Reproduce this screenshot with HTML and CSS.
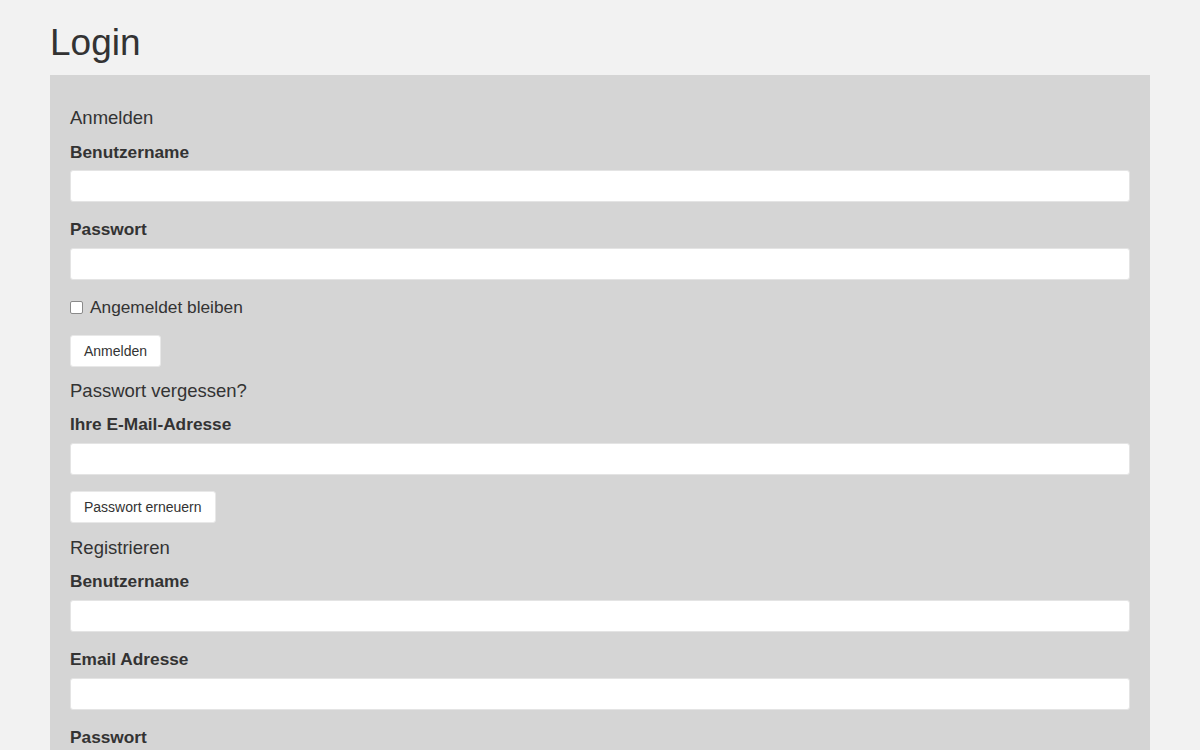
FILE: index.html
```html
<!DOCTYPE html>
<html lang="de">
<head>
<meta charset="utf-8">
<title>Login</title>
<link rel="stylesheet" href="styles.css">
</head>
<body>
<div class="page">
  <h1 class="title">Login</h1>
  <div class="panel">
    <form class="section">
      <h2 class="section-title">Anmelden</h2>
      <div class="field">
        <label class="label">Benutzername</label>
        <input class="input" type="text">
      </div>
      <div class="field">
        <label class="label">Passwort</label>
        <input class="input" type="password">
      </div>
      <label class="check"><span class="box"></span>Angemeldet bleiben</label>
      <button class="btn" type="button">Anmelden</button>
    </form>
    <form class="section">
      <h2 class="section-title">Passwort vergessen?</h2>
      <div class="field">
        <label class="label">Ihre E-Mail-Adresse</label>
        <input class="input" type="text">
      </div>
      <button class="btn" type="button">Passwort erneuern</button>
    </form>
    <form class="section">
      <h2 class="section-title">Registrieren</h2>
      <div class="field">
        <label class="label">Benutzername</label>
        <input class="input" type="text">
      </div>
      <div class="field">
        <label class="label">Email Adresse</label>
        <input class="input" type="text">
      </div>
      <div class="field">
        <label class="label">Passwort</label>
        <input class="input" type="password">
      </div>
    </form>
  </div>
</div>
</body>
</html>
```

FILE: styles.css
```css
html, body {
  margin: 0;
  padding: 0;
  background: #f2f2f2;
  font-family: "Liberation Sans", Arial, sans-serif;
  color: #333;
}
.page {
  padding: 0 50px;
}
.title {
  margin: 21px 0 10px;
  font-size: 37px;
  line-height: 44px;
  font-weight: normal;
  color: #333;
}
.panel {
  background: #d5d5d5;
  padding: 31px 20px 40px;
}
.section {
  display: flex;
  flex-direction: column;
  align-items: flex-start;
  margin: 0;
}
.section + .section {
  margin-top: 12px;
}
.section:last-child {
  margin-top: 13px;
}
.section-title {
  margin: 0 0 10px;
  font-size: 18.5px;
  line-height: 24px;
  font-weight: normal;
  color: #333;
}
.section:first-child .section-title {
  margin-bottom: 11px;
}
.field {
  width: 100%;
  display: flex;
  flex-direction: column;
  margin-bottom: 16px;
}
.label {
  font-size: 17.3px;
  line-height: 22px;
  font-weight: bold;
  margin-bottom: 8px;
  color: #333;
}
.section:first-child .field:first-of-type .label {
  margin-bottom: 7px;
}
.input {
  box-sizing: border-box;
  width: 100%;
  height: 32px;
  margin: 0;
  border: 1px solid #e4e4e4;
  border-radius: 3px;
  background: #fff;
  font: inherit;
}
.check {
  display: flex;
  align-items: center;
  font-size: 17.3px;
  line-height: 22px;
  margin-bottom: 17px;
  color: #333;
}
.box {
  box-sizing: border-box;
  width: 13px;
  height: 13px;
  border: 1px solid #8a8a8a;
  border-radius: 2px;
  background: #fff;
  margin: 1px 7px 0 0;
}
.btn {
  box-sizing: border-box;
  height: 32px;
  padding: 0 13px;
  border: 1px solid #e8e8e8;
  border-radius: 3px;
  background: #fff;
  font-family: "Liberation Sans", Arial, sans-serif;
  font-size: 14px;
  color: #333;
}
```
